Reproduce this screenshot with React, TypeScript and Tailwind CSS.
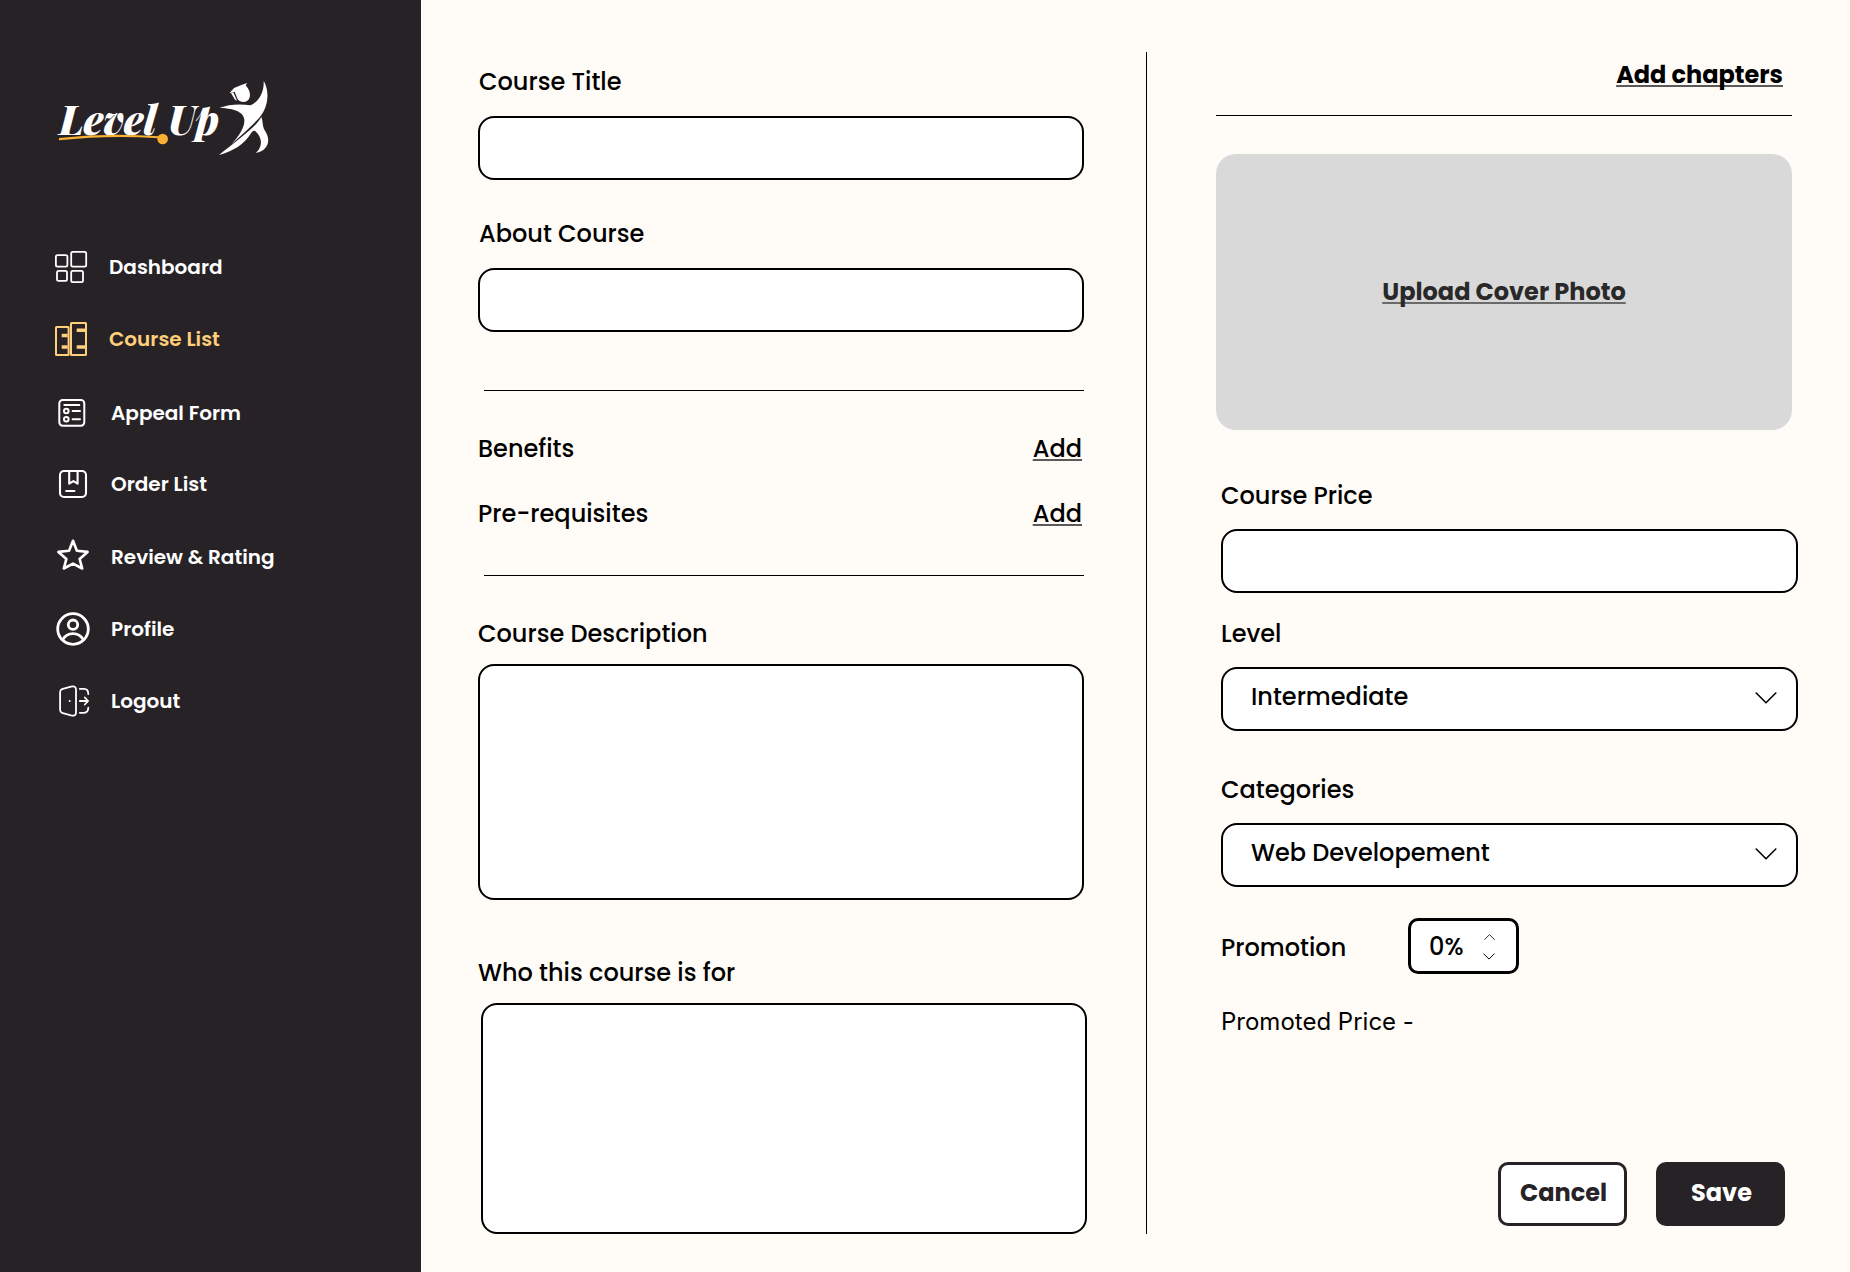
import type { ReactNode } from "react";

function Logo() {
  return (
    <svg className="ml-10 mt-[60px] h-[120px] w-[250px] shrink-0" viewBox="0 0 750 360">
      <g
        fill="#fff"
        fontFamily="'Playfair Display', 'DM Serif Display', 'Liberation Serif', serif"
        fontStyle="italic"
        fontWeight={900}
        fontSize={120}
      >
        <text x={58} y={226} textLength={291} lengthAdjust="spacingAndGlyphs">
          Level
        </text>
        <text x={384} y={226} textLength={153} lengthAdjust="spacingAndGlyphs">
          Up
        </text>
      </g>
      <path d="M57 234 Q210 217 356 229 L356 235 Q210 224 57 241 Z" fill="#f8b133" />
      <circle cx={368} cy={237} r={16} fill="#f8b133" />
      <g fill="#fff">
        <path d="M568 100 L582 84 L606 74 L622 69 L617 76 Q631 92 630 108 Q627 126 608 126 Q596 124 591 113 L584 95 Z" />
        <path d="M573 99 L580 97 L591 122 L585 119 Z" />
        <path d="M671 62 C690 95 684 140 662 168 C645 190 605 225 573 254 C600 225 614 200 613 180 C612 160 590 145 538 144 C565 133 600 131 632 136 C655 125 673 100 671 62 Z" />
        <path d="M664 171 C650 198 600 235 537 285 C580 272 612 255 634 218 Q641 209 648 215 C668 235 668 262 647 279 C685 272 694 240 675 212 C666 198 670 185 664 171 Z" />
      </g>
    </svg>
  );
}

function Icon({ children, width = 2 }: { children: ReactNode; width?: number }) {
  return (
    <svg
      className="size-9 shrink-0"
      viewBox="0 0 36 36"
      fill="none"
      stroke="currentColor"
      strokeWidth={width}
      strokeLinecap="round"
      strokeLinejoin="round"
    >
      {children}
    </svg>
  );
}

const dashboardIcon = (
  <Icon width={1.8}>
    <rect x={0.9} y={6.2} width={11.5} height={11.5} rx={1.6} />
    <rect x={16.2} y={2.9} width={15} height={14.8} rx={1.6} />
    <rect x={2} y={21.8} width={10} height={10} rx={1.6} />
    <rect x={16.2} y={21.8} width={11.8} height={11.4} rx={1.6} />
  </Icon>
);

const courseIcon = (
  <Icon width={2}>
    <rect x={1} y={6} width={12.6} height={28} rx={0.5} />
    <rect x={16} y={2} width={15} height={32} rx={0.5} />
    <path d="M6.7 14.5h6M6.7 26h6M21.7 9.3h8.6M21.7 26h8.6" strokeWidth={3.6} strokeLinecap="butt" />
  </Icon>
);

const formIcon = (
  <Icon>
    <rect x={4.3} y={5} width={25} height={25.7} rx={3.4} />
    <path d="M9.3 10h15M17.6 16h7.4M17.6 24.3h7.4" />
    <circle cx={11.3} cy={16} r={2.3} />
    <circle cx={11.3} cy={24.3} r={2.3} />
  </Icon>
);

const orderIcon = (
  <Icon width={2.1}>
    <rect x={5} y={5} width={26} height={26} rx={4} />
    <path d="M14.2 5v12.7l4.2-2.6 4.2 2.6V5M11.2 25h8.2" />
  </Icon>
);

const starIcon = (
  <Icon width={2.6}>
    <path d="M18 1.8l3.9 10 10.7 1.1-8 7 2.6 9.6L18 24.6l-9.2 4.9 2.6-9.6-8-7 10.7-1.1z" />
  </Icon>
);

const profileIcon = (
  <Icon width={2.8}>
    <circle cx={18} cy={18} r={15.3} />
    <circle cx={18} cy={13.7} r={4.7} />
    <path d="M7.7 28.6c2.4-4 6-5.9 10.3-5.9s7.9 1.9 10.3 5.9" />
  </Icon>
);

const logoutIcon = (
  <Icon width={1.8}>
    <path d="M7 6.2l9-2.6c3.2-.8 5 .2 5 3v22.8c0 2.8-1.800 3.800-5 3l-9-2.600c-1.400-.5-1.900-1.400-1.900-3V9.200c0-1.600.5-2.500 1.900-3z" />
    <circle cx={14.7} cy={18} r={1} fill="currentColor" stroke="none" />
    <path d="M24.800 5.800h4.200c3 0 4.300 1.300 4.300 5.200M24.800 29.800h4.200c3 0 4.300-1.300 4.300-5.200M24.800 18h8M29.800 14.500l3.300 3.500-3.300 3.500" />
  </Icon>
);

const navItems = [
  { label: "Dashboard", icon: dashboardIcon, className: "mt-[69px] gap-[18px] text-white" },
  { label: "Course List", icon: courseIcon, className: "mt-9 gap-[18px] text-[#ffcf79]" },
  { label: "Appeal Form", icon: formIcon, className: "mt-[38px] gap-5 text-white" },
  { label: "Order List", icon: orderIcon, className: "mt-[35px] gap-5 text-white" },
  { label: "Review & Rating", icon: starIcon, className: "mt-[37px] gap-5 text-white" },
  { label: "Profile", icon: profileIcon, className: "mt-9 gap-5 text-white" },
  { label: "Logout", icon: logoutIcon, className: "mt-9 gap-5 text-white" },
];

function Sidebar() {
  return (
    <aside className="flex w-[421px] shrink-0 flex-col bg-[#272226]">
      <Logo />
      <nav className="flex flex-col pl-[55px]">
        {navItems.map((item) => (
          <a key={item.label} className={`flex h-9 items-center text-xl leading-[30px] font-semibold ${item.className}`}>
            {item.icon}
            <span>{item.label}</span>
          </a>
        ))}
      </nav>
    </aside>
  );
}

function Chevron({ className, width = 1.6 }: { className: string; width?: number }) {
  return (
    <svg className={className} viewBox="0 0 22 12" fill="none" stroke="#000" strokeWidth={width} strokeLinecap="round" strokeLinejoin="round">
      <path d="M1.200 1l9.800 9.800L20.800 1" />
    </svg>
  );
}

function Select({ value }: { value: string }) {
  return (
    <button className="mt-[15px] ml-px flex h-16 w-[577px] justify-between rounded-2xl border-2 border-black bg-white pt-[10px] pr-[19px] pl-7 text-left">
      <span>{value}</span>
      <Chevron className="mt-[13px] h-3 w-[22px]" />
    </button>
  );
}

export default function App() {
  return (
    <div className="flex h-[1272px] w-[1850px] overflow-hidden bg-[#fffbf6] font-['Poppins','Inter',sans-serif] text-2xl leading-9 font-medium text-black">
      <Sidebar />

      <section className="ml-[57px] flex w-[609px] shrink-0 flex-col pt-16">
        <label className="ml-px">Course Title</label>
        <input className="mt-4 h-16 w-[606px] rounded-2xl border-2 border-black bg-white px-5" />
        <label className="mt-9 ml-px">About Course</label>
        <input className="mt-4 h-16 w-[606px] rounded-2xl border-2 border-black bg-white px-5" />

        <div className="mt-[58px] ml-1.5 h-px w-[600px] bg-black" />
        <div className="mt-10 flex w-[604px] justify-between">
          <span>Benefits</span>
          <a className="underline decoration-[#5c5a58] decoration-2 underline-offset-2">Add</a>
        </div>
        <div className="mt-[29px] flex w-[604px] justify-between">
          <span>Pre-requisites</span>
          <a className="underline decoration-[#5c5a58] decoration-2 underline-offset-2">Add</a>
        </div>
        <div className="mt-[43px] ml-1.5 h-px w-[600px] bg-black" />

        <label className="mt-10">Course Description</label>
        <textarea className="mt-3 h-[236px] w-[606px] shrink-0 resize-none rounded-2xl border-2 border-black bg-white p-5" />
        <label className="mt-[55px]">Who this course is for</label>
        <textarea className="mt-3 ml-[3px] h-[231px] w-[606px] shrink-0 resize-none rounded-2xl border-2 border-black bg-white p-5" />
      </section>

      <div className="mt-[52px] ml-[59px] h-[1182px] w-px shrink-0 bg-black" />

      <section className="ml-[69px] flex w-[583px] shrink-0 flex-col pt-[57px]">
        <a className="mr-4 self-end font-bold underline decoration-[#5c5a58] decoration-2 underline-offset-2 [text-decoration-skip-ink:none]">
          Add chapters
        </a>
        <div className="mt-[22px] h-px w-[576px] bg-black" />
        <div className="mt-[38px] flex h-[276px] w-[576px] justify-center rounded-[20px] bg-[#d9d9d9] pt-[120px]">
          <a className="font-bold text-[#292929] underline decoration-[#6a6a6a] decoration-2 underline-offset-2 [text-decoration-skip-ink:none]">
            Upload Cover Photo
          </a>
        </div>

        <div className="ml-1 flex flex-col">
          <label className="mt-12 ml-px">Course Price</label>
          <input className="mt-[15px] ml-px h-16 w-[577px] rounded-2xl border-2 border-black bg-white px-5" />
          <label className="mt-[23px] ml-px">Level</label>
          <Select value="Intermediate" />
          <label className="mt-[41px] ml-px">Categories</label>
          <Select value="Web Developement" />

          <div className="mt-[31px] ml-px flex h-14">
            <label className="w-[187px] pt-3">Promotion</label>
            <div className="flex w-[111px] justify-between rounded-[10px] border-3 border-black bg-white pr-[21px] pl-[18px]">
              <span className="pt-2">0%</span>
              <div className="flex w-3 flex-col items-center gap-[13px] pt-[13px]">
                <Chevron className="h-1.5 w-[11px] rotate-180" width={1.6} />
                <Chevron className="h-[7px] w-3" width={1.8} />
              </div>
            </div>
          </div>
          <p className="mt-[30px] ml-px font-['Inter',sans-serif] font-normal">Promoted Price -</p>
        </div>

        <div className="mt-[122px] flex gap-[29px] pl-[282px] font-bold">
          <button className="h-16 w-[129px] rounded-[10px] border-3 border-[#272226] bg-white pb-0.5 pl-0.5 text-[#272226]">
            Cancel
          </button>
          <button className="h-16 w-[129px] rounded-[10px] bg-[#272226] pb-0.5 pl-0.5 text-white">Save</button>
        </div>
      </section>
    </div>
  );
}
